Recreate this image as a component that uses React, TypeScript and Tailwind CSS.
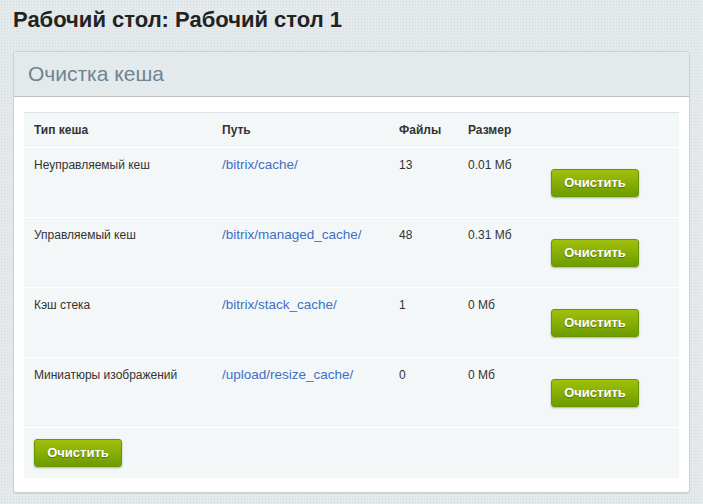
const rows = [
  { type: "Неуправляемый кеш", path: "/bitrix/cache/", files: "13", size: "0.01 Мб" },
  { type: "Управляемый кеш", path: "/bitrix/managed_cache/", files: "48", size: "0.31 Мб" },
  { type: "Кэш стека", path: "/bitrix/stack_cache/", files: "1", size: "0 Мб" },
  { type: "Миниатюры изображений", path: "/upload/resize_cache/", files: "0", size: "0 Мб" },
];

function ClearButton() {
  return (
    <button className="w-[88px] h-[28px] rounded-[3px] bg-gradient-to-b from-[#a0c10c] to-[#6d9c00] border border-[#6a9400] shadow-[0_1px_2px_rgba(0,0,0,0.3)] text-white text-[13px] font-bold [text-shadow:0_1px_1px_rgba(0,0,0,0.35)]">
      Очистить
    </button>
  );
}

export default function App() {
  return (
    <div className="w-[703px] h-[504px] bg-[#e4eaec] bg-[radial-gradient(#d4dce0_1px,transparent_1px)] bg-[length:3px_3px] px-[13px] pt-[5px] font-['Liberation_Sans',Arial,sans-serif] text-[#333]">
      <h1 className="text-[22px] font-bold text-[#222] leading-[30px]">Рабочий стол: Рабочий стол 1</h1>

      <div className="mt-[16px] w-[677px] rounded-[3px] border border-[#c9d1d5] bg-white shadow-[0_1px_1px_rgba(0,0,0,0.08)]">
        <div className="h-[45px] flex items-center px-[14px] bg-[#e4eaec] border-b border-[#b9c2c6] rounded-t-[3px]">
          <span className="text-[21px] text-[#6f8391]">Очистка кеша</span>
        </div>

        <div className="px-[10px] pt-[15px] pb-[14px]">
          <div className="bg-[#f4f7f8] border-t border-[#dae2e7]">
            <div className="grid grid-cols-[188px_177px_69px_83px_1fr] h-[35px] items-center px-[10px] border-b border-white text-[12px] font-bold text-[#333]">
              <div>Тип кеша</div>
              <div>Путь</div>
              <div>Файлы</div>
              <div>Размер</div>
              <div></div>
            </div>

            {rows.map((r) => (
              <div
                key={r.path}
                className="grid grid-cols-[188px_177px_69px_83px_1fr] h-[70px] px-[10px] border-b border-white text-[12px] leading-[16px]"
              >
                <div className="pt-[9px]">{r.type}</div>
                <div className="pt-[9px]">
                  <a className="text-[13.5px] text-[#3e70c4]">{r.path}</a>
                </div>
                <div className="pt-[9px]">{r.files}</div>
                <div className="pt-[9px]">{r.size}</div>
                <div className="pt-[21px]">
                  <ClearButton />
                </div>
              </div>
            ))}

            <div className="h-[50px] px-[10px] pt-[11px]">
              <ClearButton />
            </div>
          </div>
        </div>
      </div>
    </div>
  );
}
